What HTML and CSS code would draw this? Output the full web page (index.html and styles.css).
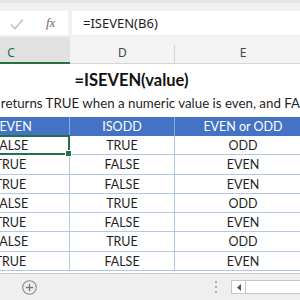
FILE: index.html
```html
<!DOCTYPE html>
<html>
<head>
<meta charset="utf-8">
<link rel="stylesheet" href="styles.css">
</head>
<body>
<div class="app">
  <div class="topbar">
    <div class="tools">
      <svg class="check" width="14" height="12" viewBox="0 0 14 12"><polyline points="1,6.5 5,10.5 13,1.5" fill="none" stroke="#c2c2c2" stroke-width="1.6"/></svg>
      <span class="fx">fx</span>
    </div>
    <div class="formula">=ISEVEN(B6)</div>
  </div>
  <div class="colheads">
    <div class="colhead active">C</div>
    <div class="colhead">D</div>
    <div class="colhead">E</div>
  </div>
  <div class="sheet">
    <div class="grid">
      <div class="title">=ISEVEN(value)</div>
      <div class="subtitle">ISEVEN returns TRUE when a numeric value is even, and FALSE if not.</div>
      <div class="th">ISEVEN</div><div class="th">ISODD</div><div class="th last">EVEN or ODD</div>
      <div class="td cur">FALSE<div class="selbox"><div class="handle"></div></div></div><div class="td">TRUE</div><div class="td last">ODD</div>
      <div class="td">TRUE</div><div class="td">FALSE</div><div class="td last">EVEN</div>
      <div class="td">TRUE</div><div class="td">FALSE</div><div class="td last">EVEN</div>
      <div class="td">FALSE</div><div class="td">TRUE</div><div class="td last">ODD</div>
      <div class="td">TRUE</div><div class="td">FALSE</div><div class="td last">EVEN</div>
      <div class="td">FALSE</div><div class="td">TRUE</div><div class="td last">ODD</div>
      <div class="td">TRUE</div><div class="td">FALSE</div><div class="td last">EVEN</div>
    </div>
  </div>
  <div class="bottombar">
    <svg class="plus" width="15" height="15" viewBox="0 0 15 15"><circle cx="7.5" cy="7.5" r="6.8" fill="none" stroke="#8a8a8a" stroke-width="1.1"/><path d="M7.5 3.8v7.4M3.8 7.5h7.4" stroke="#7a7a7a" stroke-width="1.3"/></svg>
    <div class="grip"><span></span><span></span><span></span></div>
    <div class="hscroll">
      <div class="arrow"><svg width="4" height="7" viewBox="0 0 4 7"><polygon points="4,0 0,3.5 4,7" fill="#555"/></svg></div>
    </div>
  </div>
</div>
</body>
</html>
```
FILE: styles.css
```css
html, body {
  margin: 0;
  padding: 0;
}
body {
  width: 300px;
  height: 300px;
  overflow: hidden;
  background: #ffffff;
  font-family: Lato, "Liberation Sans", sans-serif;
}
.app {
  display: flex;
  flex-direction: column;
  width: 300px;
  height: 300px;
  overflow: hidden;
}
.topbar {
  flex: 0 0 37px;
  box-sizing: border-box;
  background: #f1f1f1;
  border-top: 3px solid #e6e6e6;
  padding: 8px 0 2px 0;
  display: flex;
  gap: 4px;
}
.tools {
  flex: 0 0 68px;
  background: #ffffff;
  display: flex;
  align-items: center;
  padding-left: 10px;
  box-sizing: border-box;
}
.check {
  display: block;
  margin-top: 1px;
}
.fx {
  margin-left: 22px;
  font-family: "Liberation Serif", serif;
  font-style: italic;
  font-size: 13px;
  color: #6a6a6a;
  line-height: 24px;
}
.formula {
  flex: 1;
  background: #ffffff;
  padding-left: 11px;
  font-family: "Noto Sans", sans-serif;
  font-size: 13px;
  line-height: 24px;
  color: #1e1e1e;
  white-space: nowrap;
}
.colheads {
  flex: 0 0 27px;
  display: flex;
  margin-left: -48px;
  background: #f3f3f3;
}
.colhead {
  box-sizing: border-box;
  height: 27px;
  padding-top: 8px;
  line-height: 16px;
  text-align: center;
  font-family: "Noto Sans", sans-serif;
  font-size: 12px;
  color: #444444;
  border-bottom: 1px solid #d4d4d4;
  background: linear-gradient(#d4d4d4, #d4d4d4) right 8px / 1px 18px no-repeat, #f3f3f3;
}
.colhead:nth-child(1) { flex: 0 0 118px; }
.colhead:nth-child(2) { flex: 0 0 105px; }
.colhead:nth-child(3) { flex: 0 0 136px; }
.colhead.active {
  background: #e1e1e1;
  color: #217346;
  border-bottom: 2px solid #217346;
}
.sheet {
  flex: 1;
  background: #ffffff;
  overflow: hidden;
}
.grid {
  margin-left: -48px;
  width: 359px;
  display: grid;
  grid-template-columns: 118px 105px 136px;
  grid-template-rows: 28px 25px 19px repeat(7, 19.3px);
  font-size: 12.5px;
  color: #1f1f1f;
}
.title {
  grid-column: 1 / -1;
  text-align: center;
  font-weight: 700;
  font-size: 16.5px;
  line-height: 1.2;
  padding-top: 7px;
  color: #111111;
  white-space: nowrap;
}
.subtitle {
  grid-column: 1 / -1;
  padding-left: 0;
  padding-top: 3px;
  font-size: 13.3px;
  line-height: 16px;
  white-space: nowrap;
  color: #1f1f1f;
}
.th {
  background: #4472c4;
  color: #ffffff;
  text-align: center;
  line-height: 19px;
  border-right: 1px solid #8eaadb;
  white-space: nowrap;
}
.td {
  text-align: center;
  line-height: 19px;
  box-sizing: border-box;
  border-right: 1px solid #b4c6e7;
  border-bottom: 1px solid #b4c6e7;
  white-space: nowrap;
}
.th.last, .td.last {
  border-right: none;
}
.td.cur {
  position: relative;
}
.selbox {
  position: absolute;
  top: -1px;
  right: -1px;
  bottom: -1px;
  left: -1px;
  border: 2px solid #217346;
}
.handle {
  position: absolute;
  right: -4px;
  bottom: -4px;
  width: 7px;
  height: 7px;
  box-sizing: border-box;
  background: #217346;
  border: 1px solid #ffffff;
}
.bottombar {
  flex: 0 0 27px;
  box-sizing: border-box;
  border-top: 1px solid #c9c9c9;
  background: #efefef;
  display: flex;
  align-items: center;
  padding-left: 22px;
}
.plus {
  display: block;
  flex: 0 0 15px;
}
.grip {
  margin-left: 178px;
  display: flex;
  flex-direction: column;
  gap: 3px;
}
.grip span {
  display: block;
  width: 2px;
  height: 2px;
  background: #b0b0b0;
}
.hscroll {
  margin-left: 14px;
  flex: 0 0 80px;
  height: 14px;
  box-sizing: border-box;
  border: 1px solid #c6c6c6;
  background: #ffffff;
  display: flex;
}
.arrow {
  flex: 0 0 13px;
  border-right: 1px solid #c6c6c6;
  display: flex;
  align-items: center;
  justify-content: center;
}
.arrow svg {
  display: block;
}
```
